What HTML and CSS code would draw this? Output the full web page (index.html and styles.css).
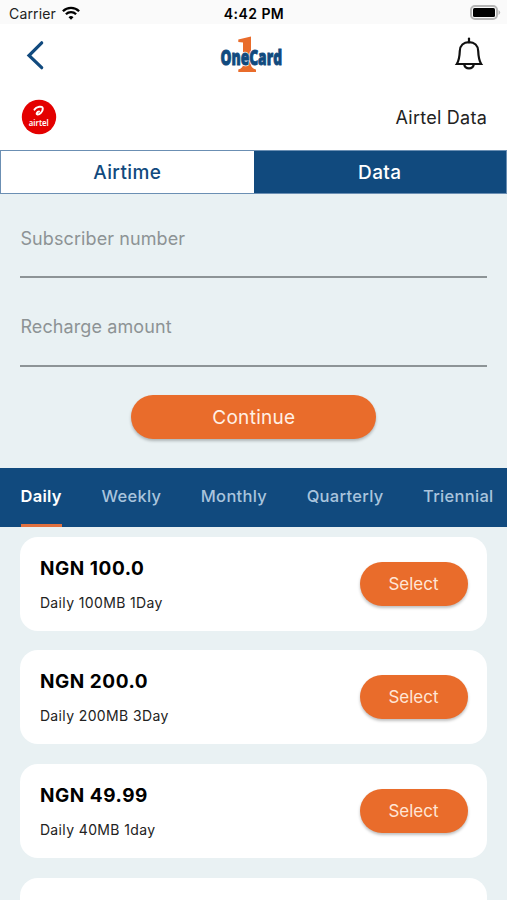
FILE: index.html
```html
<!DOCTYPE html>
<html lang="en">
    <head>
        <meta charset="UTF-8">
        <title>OneCard - Airtel Data</title>
        <link rel="stylesheet" href="styles.css">
    </head>
    <body>
        <div class="status">
            <div class="carrier">
                <span>Carrier</span>
                <svg width="18" height="14" viewBox="0 0 18 14" fill="none" stroke="#000" stroke-width="2.3">
                    <path d="M.9 5.2a11.5 11.5 0 0 1 16.2 0"/>
                    <path d="M3.9 8.3a7.2 7.2 0 0 1 10.2 0"/>
                    <path d="M9 13.8l-2.5-2.6a3.6 3.6 0 0 1 5 0z" fill="#000" stroke="none"/>
                </svg>
            </div>
            <b class="time">4:42 PM</b>
            <svg class="battery" width="32" height="16" viewBox="0 0 32 16">
                <rect x="1" y="1" width="26" height="13" rx="4" fill="#fafafa" stroke="#b5b5b5" stroke-width="2"/>
                <rect x="3" y="3" width="22" height="9" rx="1.5"/>
                <path d="M28.5 5q3.5 2.5 0 5z" fill="#b5b5b5"/>
            </svg>
        </div>
        <header>
            <svg width="18" height="30" viewBox="0 0 18 30" fill="none" stroke="#114a7e" stroke-width="3.2">
                <path d="M15.7 2.8L3 15.5l12.7 12.2" stroke-linecap="round"/>
            </svg>
            <svg class="logo" width="66" height="40" viewBox="0 0 66 40">
                <path d="M20.300 4.600L33 1.600v28q0 3.500 5 5V37H20.300V34.600q4.700-1.500 4.700-5V7.400l-4.700-.5z" fill="#e96c2b"/>
                <text x="2.500" y="29.500" textLength="61.500" lengthAdjust="spacingAndGlyphs" class="logo-edge">OneCard</text>
                <text x="2.500" y="29.500" textLength="61.500" lengthAdjust="spacingAndGlyphs" class="logo-text">OneCard</text>
            </svg>
            <svg width="30" height="36" viewBox="0 0 30 36" fill="none" stroke="#111" stroke-width="2.2">
                <path d="M15 1.500v4" stroke-linecap="round"/>
                <path d="M2.800 27C5.400 23 5.600 19 5.800 14C6 8.500 9.500 5.200 15 5.200S24 8.500 24.200 14C24.400 19 24.600 23 27.200 27z"/>
                <path d="M10.200 27.500a4.900 4.900 0 0 0 9.600 0"/>
            </svg>
        </header>
        <section class="provider">
            <svg width="36" height="36" viewBox="0 0 36 36">
                <circle cx="18" cy="18" r="17.200" fill="#e40000"/>
                <path d="M13.500 10.600C15 8 21.800 6 21.800 9.800C21.800 12.800 18.500 15.800 16.600 15.600C14.600 15.200 16.200 12.600 18 12.600" fill="none" stroke="#fff" stroke-width="2" stroke-linecap="round"/>
                <text x="7.800" y="27.300" textLength="20" lengthAdjust="spacingAndGlyphs" class="airtel">airtel</text>
            </svg>
            <span>Airtel Data</span>
        </section>
        <nav class="type">
            <a>Airtime</a>
            <a class="on">Data</a>
        </nav>
        <form>
            <div class="field">Subscriber number</div>
            <div class="field">Recharge amount</div>
            <button type="button" class="continue">Continue</button>
        </form>
        <nav class="period">
            <a class="on">Daily</a>
            <a>Weekly</a>
            <a>Monthly</a>
            <a>Quarterly</a>
            <a>Triennial</a>
        </nav>
        <main>
            <div class="plan">
                <div>
                    <h2>NGN 100.0</h2>
                    <p>Daily 100MB 1Day</p>
                </div>
                <button type="button">Select</button>
            </div>
            <div class="plan">
                <div>
                    <h2>NGN 200.0</h2>
                    <p>Daily 200MB 3Day</p>
                </div>
                <button type="button">Select</button>
            </div>
            <div class="plan">
                <div>
                    <h2>NGN 49.99</h2>
                    <p>Daily 40MB 1day</p>
                </div>
                <button type="button">Select</button>
            </div>
            <div class="plan last"></div>
        </main>
    </body>
</html>
```
FILE: styles.css
```css
*{
    box-sizing: border-box;
}
html,body{
    margin: 0;
    height: 900px;
    overflow: hidden;
    font-family: Inter, "Liberation Sans", sans-serif;
    background: #e9f1f3;
    color: #222;
}
body{
    display: flex;
    flex-direction: column;
}
.status{
    height: 24px;
    flex: none;
    padding: 2px 5px 0 9px;
    display: grid;
    grid-template-columns: 1fr auto 1fr;
    align-items: center;
    background: #fafafa;
    font-size: 14px;
}
.carrier{
    display: flex;
    align-items: center;
    gap: 6px;
    letter-spacing: .15px;
}
.time{
    margin-right: 3px;
    color: #000;
    font-weight: 600;
    letter-spacing: .45px;
}
.battery{
    justify-self: end;
}
header{
    height: 64px;
    flex: none;
    padding: 0 23px 2px 26px;
    display: grid;
    grid-template-columns: 192px 66px 1fr;
    align-items: center;
    background: #fff;
}
header svg:last-child{
    justify-self: end;
}
.logo{
    overflow: visible;
}
.logo-text,.logo-edge{
    font-family: "Open Sans", sans-serif;
    font-size: 21px;
    font-weight: 800;
    fill: #114a7e;
    stroke: #114a7e;
    stroke-width: .9;
}
.logo-edge{
    stroke: #fff;
    stroke-width: 2.5;
}
.provider{
    height: 62px;
    flex: none;
    padding: 0 20px 4px 21px;
    display: flex;
    justify-content: space-between;
    align-items: center;
    background: #fff;
    font-size: 18px;
    letter-spacing: .25px;
}
.airtel{
    font-family: "Noto Sans", sans-serif;
    font-size: 9.5px;
    font-weight: 600;
    letter-spacing: 0;
    fill: #fff;
}
.type{
    height: 44px;
    flex: none;
    display: flex;
    border: 1px solid #6b8fb3;
    background: #fff;
    font-size: 19px;
    font-weight: 500;
    letter-spacing: .4px;
    color: #114a7e;
}
.type a{
    flex: 1;
    display: flex;
    align-items: center;
    justify-content: center;
}
.type .on{
    background: #114a7e;
    color: #fff;
}
form{
    height: 274px;
    flex: none;
    padding: 0 20px 0 20.4px;
    display: flex;
    flex-direction: column;
}
.field{
    height: 88.5px;
    padding-top: 37px;
    border-bottom: 2px solid #8d9496;
    font-size: 18px;
    line-height: 24px;
    letter-spacing: .1px;
    color: #8d9395;
}
.field:first-child{
    height: 84px;
    padding-top: 33px;
}
button{
    border: 0;
    padding: 0;
    border-radius: 22px;
    background: #e96c2b;
    color: #fff0e5;
    font-family: inherit;
    box-shadow: 0 2px 3px rgba(0,0,0,.25);
}
.continue{
    width: 245px;
    height: 44px;
    margin: 28.5px 0 0 111px;
    font-size: 19px;
    letter-spacing: .3px;
}
.period{
    height: 59px;
    flex: none;
    padding-left: 20.5px;
    display: flex;
    gap: 39.5px;
    background: #114a7e;
    color: #a9c4dd;
    font-size: 16.5px;
    font-weight: 500;
    line-height: 56px;
    letter-spacing: .3px;
    white-space: nowrap;
}
.period .on{
    border-bottom: 3px solid #e0703f;
    color: #fff;
    font-weight: 600;
}
main{
    flex: 1;
    min-height: 0;
    overflow: hidden;
    padding: 9.5px 20px 0 20.4px;
    display: flex;
    flex-direction: column;
    gap: 19.7px;
}
.plan{
    height: 94px;
    flex: none;
    padding: 0 19.5px;
    display: flex;
    justify-content: space-between;
    align-items: center;
    border-radius: 18px;
    background: #fff;
}
.last{
    height: 22.4px;
    border-radius: 18px 18px 0 0;
}
.plan h2{
    margin: 2px 0 12px;
    font-size: 19px;
    line-height: 24px;
    font-weight: 700;
    letter-spacing: .55px;
    color: #000;
}
.plan p{
    margin: 0;
    font-size: 14px;
    line-height: 20px;
    letter-spacing: .37px;
}
.plan button{
    width: 108px;
    height: 44px;
    font-size: 17px;
    color: #ffe6d6;
}
```
